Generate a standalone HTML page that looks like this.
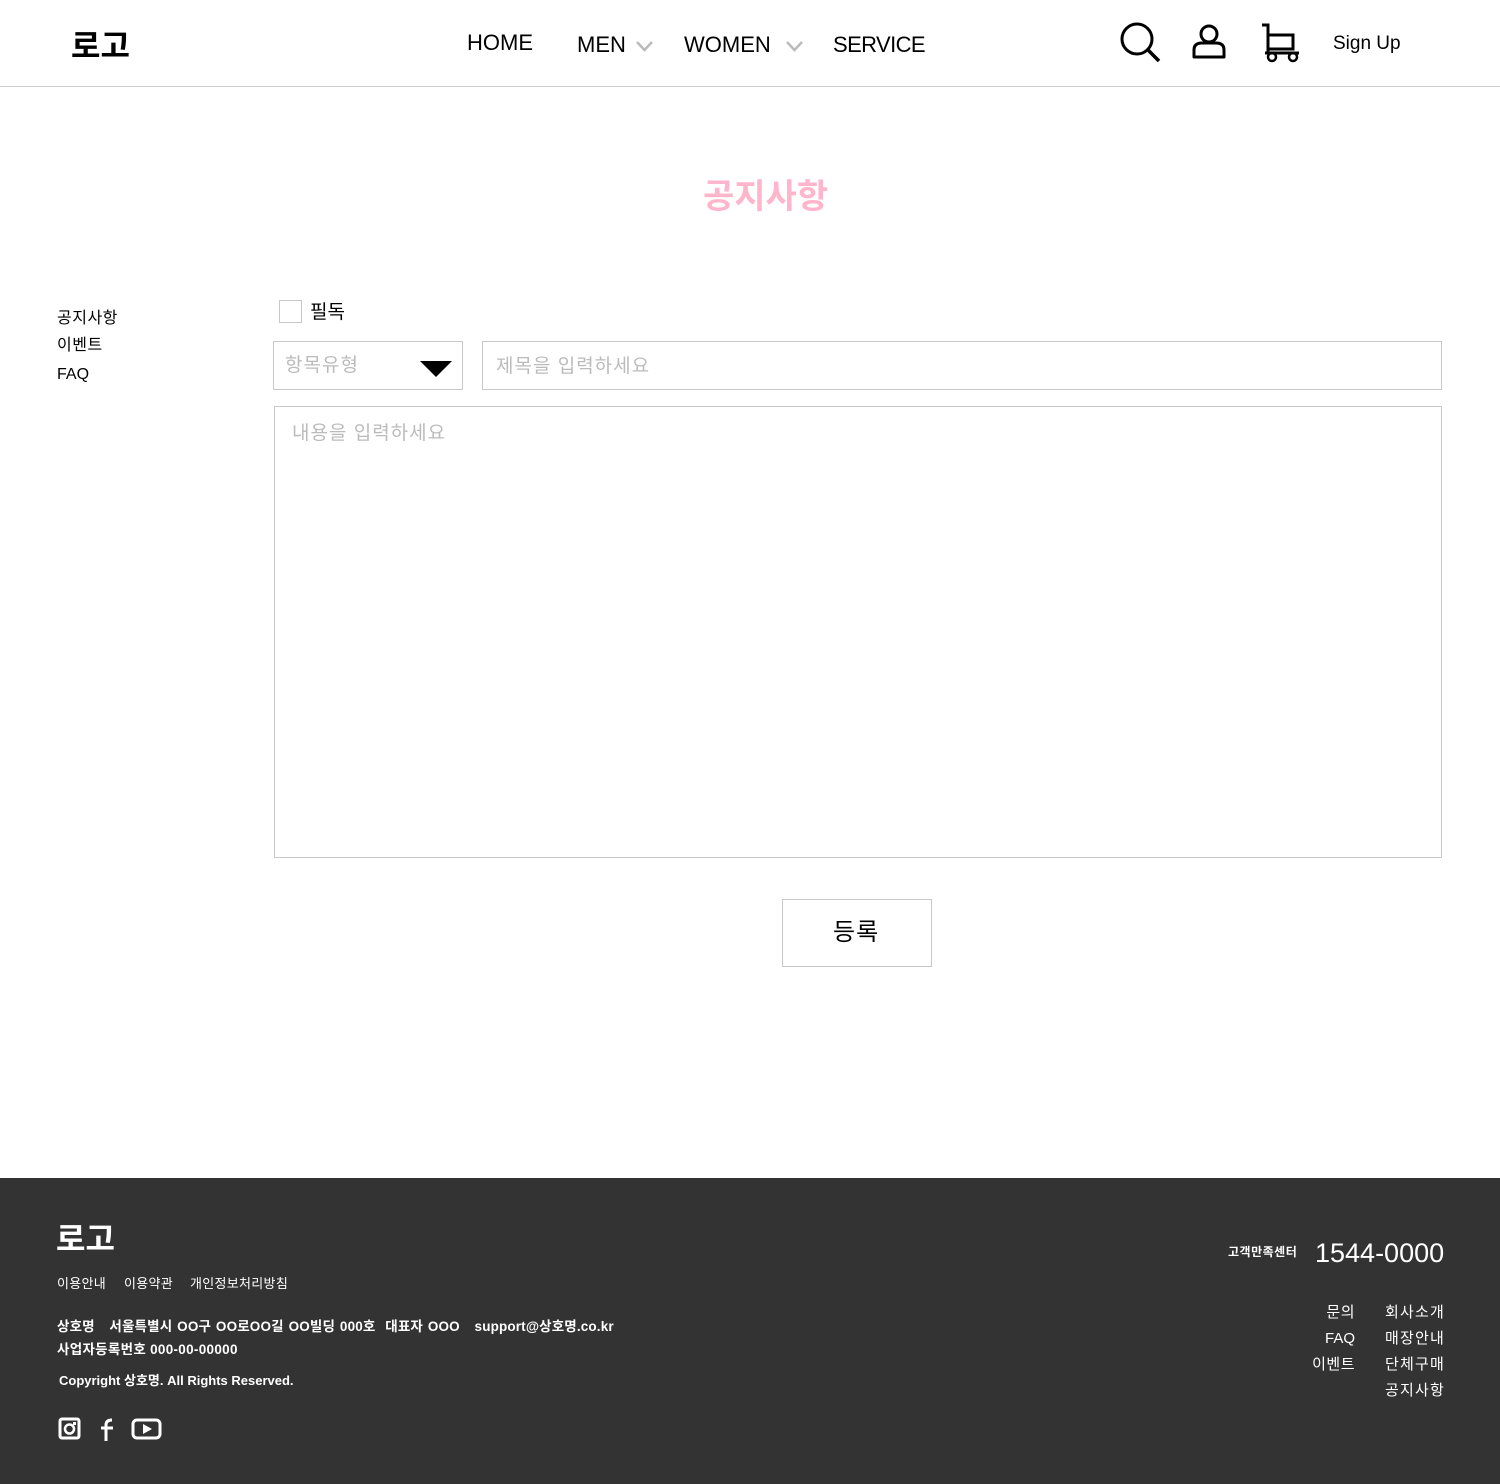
<!DOCTYPE html>
<html><head><meta charset="utf-8"><style>
*{margin:0;padding:0;box-sizing:border-box}
body{width:1500px;height:1484px;position:relative;background:#fff;font-family:"Liberation Sans","Noto Sans CJK KR",sans-serif;color:#000;overflow:hidden}
.t{position:absolute;white-space:nowrap;line-height:1}
.box{position:absolute;border:1px solid #c8c8c8}
.ph{color:#bbb;letter-spacing:1px}
.w{color:#fff}
</style></head><body>
<div class="t" style="left:71px;top:28px;font-size:32px;font-weight:bold;font-family:'Noto Sans CJK KR',sans-serif">로고</div>
<div class="t" style="left:467px;top:32px;font-size:22px">HOME</div>
<div class="t" style="left:577px;top:34px;font-size:22px">MEN</div>
<svg style="position:absolute;left:636px;top:41px" width="17" height="11"><path d="M1 1 L8.5 9 L16 1" fill="none" stroke="#bbb" stroke-width="2.5"/></svg>
<div class="t" style="left:684px;top:34px;font-size:22px">WOMEN</div>
<svg style="position:absolute;left:786px;top:41px" width="17" height="11"><path d="M1 1 L8.5 9 L16 1" fill="none" stroke="#bbb" stroke-width="2.5"/></svg>
<div class="t" style="left:833px;top:34px;font-size:22px;letter-spacing:-0.6px">SERVICE</div>
<svg style="position:absolute;left:1118px;top:20px" width="46" height="46"><circle cx="19" cy="19" r="15" fill="none" stroke="#000" stroke-width="3"/><path d="M30 30 L41 41" stroke="#000" stroke-width="3.5"/></svg>
<svg style="position:absolute;left:1190px;top:23px" width="38" height="38"><circle cx="19" cy="11" r="8" fill="none" stroke="#000" stroke-width="3"/><path d="M4 34 V27 Q4 20 12 20 H26 Q34 20 34 27 V34 Z" fill="none" stroke="#000" stroke-width="3" stroke-linejoin="round"/></svg>
<svg style="position:absolute;left:1260px;top:22px" width="42" height="42"><path d="M2 3 H8 V31 M8 13 H33 V27 H8 M5 31 H39" fill="none" stroke="#000" stroke-width="3"/><circle cx="12" cy="35" r="4" fill="none" stroke="#000" stroke-width="2.5"/><circle cx="33" cy="35" r="4" fill="none" stroke="#000" stroke-width="2.5"/></svg>
<div class="t" style="left:1333px;top:34px;font-size:19px">Sign Up</div>
<div style="position:absolute;left:0;top:86px;width:1500px;height:1px;background:#ccc"></div>

<div class="t" style="left:703px;top:177px;font-size:34px;font-weight:bold;color:#ffb5cc;font-family:'Noto Sans CJK KR',sans-serif">공지사항</div>

<div class="t" style="left:57px;top:311px;font-size:16px;letter-spacing:0.5px">공지사항</div>
<div class="t" style="left:57px;top:338px;font-size:16px;letter-spacing:0.5px">이벤트</div>
<div class="t" style="left:57px;top:367px;font-size:16px">FAQ</div>

<div class="box" style="left:279px;top:300px;width:23px;height:23px"></div>
<div class="t" style="left:310px;top:303px;font-size:19px">필독</div>
<div class="box" style="left:273px;top:341px;width:190px;height:49px"></div>
<div class="t ph" style="left:285px;top:356px;font-size:19px">항목유형</div>
<svg style="position:absolute;left:420px;top:361px" width="32" height="16"><path d="M0 0 H32 L16 16 Z" fill="#000"/></svg>
<div class="box" style="left:482px;top:341px;width:960px;height:49px"></div>
<div class="t ph" style="left:496px;top:357px;font-size:19px">제목을 입력하세요</div>
<div class="box" style="left:274px;top:406px;width:1168px;height:452px"></div>
<div class="t ph" style="left:292px;top:424px;font-size:19px">내용을 입력하세요</div>
<div class="box" style="left:782px;top:899px;width:150px;height:68px"></div>
<div class="t" style="left:833px;top:921px;font-size:24px;letter-spacing:1px">등록</div>

<div style="position:absolute;left:0;top:1178px;width:1500px;height:306px;background:#333"></div>
<div class="t w" style="left:56px;top:1221px;font-size:32px;font-weight:bold;font-family:'Noto Sans CJK KR',sans-serif">로고</div>
<div class="t w" style="left:57px;top:1277px;font-size:13px;letter-spacing:0.3px">이용안내</div>
<div class="t w" style="left:124px;top:1277px;font-size:13px;letter-spacing:0.3px">이용약관</div>
<div class="t w" style="left:190px;top:1277px;font-size:13px;letter-spacing:0.3px">개인정보처리방침</div>
<div class="t w" style="left:57px;top:1320px;font-size:13.5px;font-weight:bold;letter-spacing:0.15px;word-spacing:1px">상호명 &nbsp;&nbsp;서울특별시 OO구 OO로OO길 OO빌딩 000호 &nbsp;대표자 OOO &nbsp;&nbsp;support@상호명.co.kr</div>
<div class="t w" style="left:57px;top:1343px;font-size:13.5px;font-weight:bold;letter-spacing:0.3px">사업자등록번호 000-00-00000</div>
<div class="t w" style="left:59px;top:1374px;font-size:13px;font-weight:bold">Copyright 상호명. All Rights Reserved.</div>
<svg style="position:absolute;left:58px;top:1417px" width="24" height="24"><rect x="2" y="2" width="19" height="19" rx="2" fill="none" stroke="#fff" stroke-width="3"/><circle cx="11.5" cy="12" r="4.5" fill="none" stroke="#fff" stroke-width="2.5"/><rect x="15" y="5" width="3" height="3" fill="#fff"/></svg>
<svg style="position:absolute;left:98px;top:1417px" width="20" height="24"><path d="M8 24 V8 Q8 3 14 3 M3 11 H15" fill="none" stroke="#fff" stroke-width="3"/></svg>
<svg style="position:absolute;left:131px;top:1418px" width="32" height="22"><rect x="2" y="2" width="27" height="18" rx="4" fill="none" stroke="#fff" stroke-width="3"/><path d="M12 6 L21 11 L12 16 Z" fill="#fff"/></svg>

<div class="t w" style="left:1228px;top:1246px;font-size:12px;font-weight:bold;letter-spacing:0.5px">고객만족센터</div>
<div class="t w" style="left:1315px;top:1240px;font-size:27px">1544-0000</div>
<div class="t w" style="right:145px;top:1305px;font-size:15px;letter-spacing:0.5px">문의</div>
<div class="t w" style="right:145px;top:1331px;font-size:15px">FAQ</div>
<div class="t w" style="right:145px;top:1357px;font-size:15px;letter-spacing:0.5px">이벤트</div>
<div class="t w" style="left:1385px;top:1305px;font-size:15px;letter-spacing:1.2px">회사소개</div>
<div class="t w" style="left:1385px;top:1331px;font-size:15px;letter-spacing:1.2px">매장안내</div>
<div class="t w" style="left:1385px;top:1357px;font-size:15px;letter-spacing:1.2px">단체구매</div>
<div class="t w" style="left:1385px;top:1383px;font-size:15px;letter-spacing:1.2px">공지사항</div>
</body></html>
